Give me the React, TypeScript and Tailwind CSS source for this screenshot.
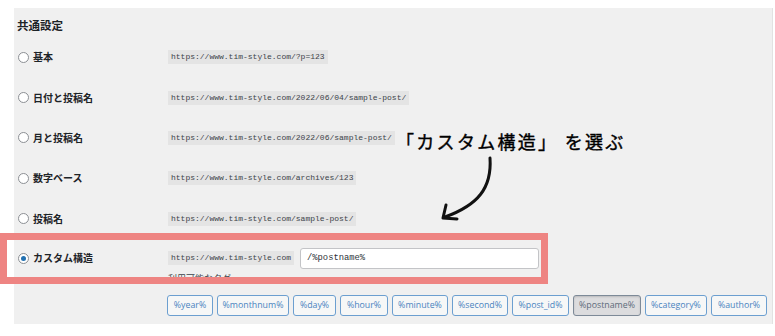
import React from "react";

const jp = { fontFamily: '"Noto Sans CJK JP", "Noto Sans", sans-serif' };
const mono = { fontFamily: '"Liberation Mono", "DejaVu Sans Mono", monospace' };

function Radio({ checked = false }: { checked?: boolean }) {
  return (
    <span className="w-[11px] h-[11px] rounded-full border border-[#8c8f94] bg-white flex items-center justify-center shrink-0">
      {checked && <span className="w-[5px] h-[5px] rounded-full bg-[#2271b1]" />}
    </span>
  );
}

function Code({ children }: { children: React.ReactNode }) {
  return (
    <span className="bg-[#e4e4e4] text-[#3c434a] text-[8px] leading-[14px] h-[14px] px-[3px] inline-block" style={mono}>
      {children}
    </span>
  );
}

const rows = [
  { label: "基本", url: "https://www.tim-style.com/?p=123" },
  { label: "日付と投稿名", url: "https://www.tim-style.com/2022/06/04/sample-post/" },
  { label: "月と投稿名", url: "https://www.tim-style.com/2022/06/sample-post/" },
  { label: "数字ベース", url: "https://www.tim-style.com/archives/123" },
  { label: "投稿名", url: "https://www.tim-style.com/sample-post/" },
];

const tags: { t: string; w: number; active?: boolean }[] = [
  { t: "%year%", w: 46 },
  { t: "%monthnum%", w: 72 },
  { t: "%day%", w: 43 },
  { t: "%hour%", w: 48 },
  { t: "%minute%", w: 56 },
  { t: "%second%", w: 56 },
  { t: "%post_id%", w: 57 },
  { t: "%postname%", w: 68, active: true },
  { t: "%category%", w: 62 },
  { t: "%author%", w: 56 },
];

export default function App() {
  return (
    <div className="w-[775px] h-[336px] bg-white relative overflow-hidden" style={jp}>
      <div className="ml-[14px] mt-[8px] w-[759px] h-[316px] bg-[#f0f0f0] pl-[4px] flex flex-col border-r border-[#e2e2e2]">
        <div className="h-[29px] pt-[3px]">
          <span className="text-[11.5px] leading-[14px] font-bold text-[#1d2327] -ml-[1px]">共通設定</span>
        </div>
        {rows.map((r) => (
          <div key={r.label} className="h-[40.4px] flex items-center">
            <div className="w-[150px] flex items-center">
              <Radio />
              <span className="ml-[4px] text-[10px] font-bold text-[#1d2327] leading-[12px]">{r.label}</span>
            </div>
            <Code>{r.url}</Code>
          </div>
        ))}
        <div className="flex pt-[9px]">
          <div className="w-[150px] h-[21px] flex items-center">
            <Radio checked />
            <span className="ml-[4px] text-[10px] font-bold text-[#1d2327] leading-[12px]">カスタム構造</span>
          </div>
          <div className="flex flex-col">
            <div className="h-[21px] flex items-center">
              <Code>https://www.tim-style.com</Code>
              <div className="ml-[6px] w-[239px] h-[21px] bg-white border border-[#c3c4c7] rounded-[3px] flex items-center pl-[6px]">
                <span className="text-[8.8px] text-[#2c3338]" style={mono}>/%postname%</span>
              </div>
            </div>
            <div className="mt-[4px] text-[9px] leading-[11px] text-[#3c434a]">利用可能なタグ</div>
            <div className="mt-[11px] flex gap-[4px] -ml-[1px]">
              {tags.map((g) => (
                <span
                  key={g.t}
                  style={{ width: g.w, fontFamily: '"Open Sans", "Noto Sans", sans-serif' }}
                  className={
                    g.active
                      ? "h-[21px] flex items-center justify-center rounded-[3px] border border-[#7d8a98] bg-[#dcdcde] text-[8.8px] text-[#5d6b7a] shadow-[inset_0_1px_2px_rgba(0,0,0,0.15)]"
                      : "h-[21px] flex items-center justify-center rounded-[3px] border border-[#6c9fd0] bg-[#f6f7f7] text-[8.8px] text-[#4a84bf]"
                  }
                >
                  {g.t}
                </span>
              ))}
            </div>
          </div>
        </div>
      </div>

      {/* highlight box */}
      <div className="absolute left-0 top-[233px] w-[548px] h-[51px] border-[7px] border-[#ee8482]" />

      {/* annotation */}
      <div className="absolute left-[396px] top-[128px] text-[18px] leading-[26px] tracking-[2.3px] font-normal text-black whitespace-nowrap [-webkit-text-stroke:0.4px_black]" style={jp}>
        「カスタム構造」 を選ぶ
      </div>
      <svg className="absolute left-0 top-0" width="775" height="336" viewBox="0 0 775 336">
        <path d="M490 158 C 492 188, 478 205, 445 217" fill="none" stroke="#111" strokeWidth="3" strokeLinecap="round" />
        <path d="M446 205 L 443 218 L 457 219" fill="none" stroke="#111" strokeWidth="3" strokeLinecap="round" strokeLinejoin="round" />
      </svg>
    </div>
  );
}
